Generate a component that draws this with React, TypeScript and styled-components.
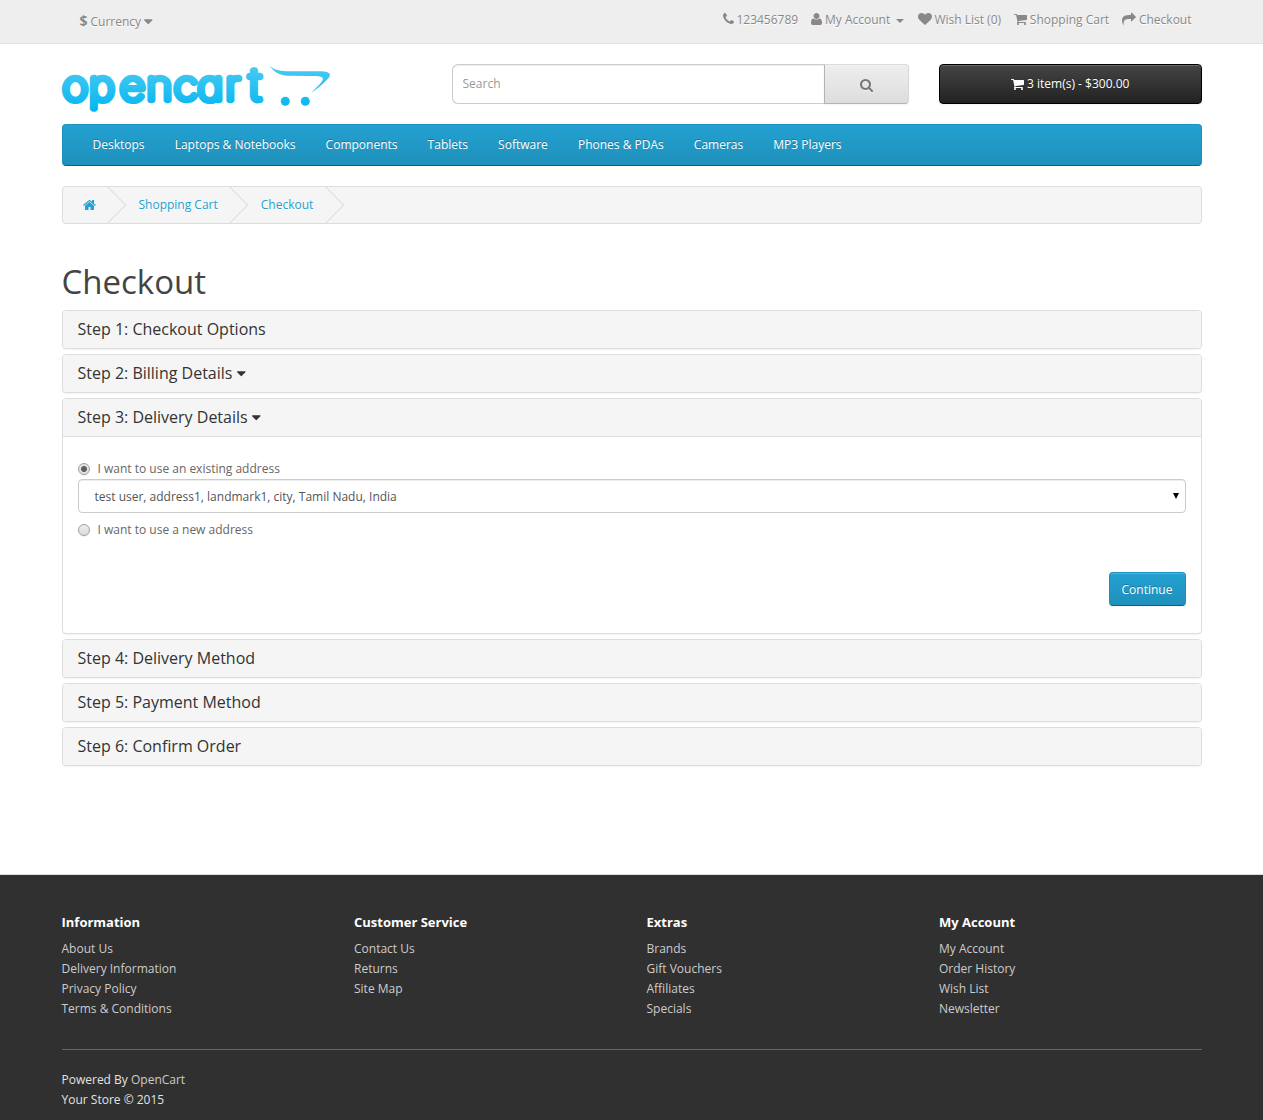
import React from "react";
import styled, { createGlobalStyle, css } from "styled-components";

const GlobalStyle = createGlobalStyle`
  *, *::before, *::after { box-sizing: border-box; }
  body {
    margin: 0;
    background: #fff;
    color: #666;
    font-family: "Open Sans", "Noto Sans", sans-serif;
    font-size: 12px;
    line-height: 20px;
  }
  a { color: inherit; text-decoration: none; }
  ul, ol { list-style: none; margin: 0; padding: 0; }
`;

const icons = {
  phone: { x: 192, w: 1408, d: "M1600 1240q0 27-10 70.5t-21 68.5q-21 50-122 106-94 51-186 51-27 0-53-3.5t-57.5-12.5-47-14.5-55.5-20.5-49-18q-98-35-175-83-127-79-264-216t-216-264q-48-77-83-175-3-9-18-49t-20.5-55.5-14.5-47-12.5-57.5-3.5-53q0-92 51-186 56-101 106-122 25-11 68.5-21t70.5-10q14 0 21 3 18 6 53 76 11 19 30 54t35 63.5 31 53.5q3 4 17.5 25t21.5 35.5 7 28.5q0 20-28.5 50t-62 55-62 53-28.5 46q0 9 5 22.5t8.5 20.5 14 24 11.5 19q76 137 174 235t235 174q2 1 19 11.5t24 14 20.5 8.5 22.5 5q18 0 46-28.5t53-62 55-62 50-28.5q14 0 28.5 7t35.5 21.5 25 17.5q25 15 53.5 31t63.5 35 54 30q70 35 76 53 3 7 3 21z" },
  user: { x: 192, w: 1408, d: "M1600 1405q0 120-73 189.5t-194 69.5h-874q-121 0-194-69.5t-73-189.5q0-53 3.5-103.5t14-109 26.5-108.5 43-97.5 62-81 85.5-53.5 111.5-20q9 0 42 21.5t74.5 48 108 48 133.5 21.5 133.5-21.5 108-48 74.5-48 42-21.5q61 0 111.5 20t85.5 53.5 62 81 43 97.5 26.5 108.5 14 109 3.5 103.5zm-320-893q0 159-112.5 271.5t-271.5 112.5-271.5-112.5-112.5-271.5 112.5-271.5 271.5-112.5 271.5 112.5 112.5 271.5z" },
  heart: { x: 0, w: 1792, d: "M896 1664q-26 0-44-18l-624-602q-10-8-27.5-26t-55.5-65.5-68-97.5-53.5-121-23.5-138q0-220 127-344t351-124q62 0 126.5 21.5t120 58 95.5 68.5 76 68q36-36 76-68t95.5-68.5 120-58 126.5-21.5q224 0 351 124t127 344q0 221-229 450l-623 600q-18 18-44 18z" },
  cart: { x: 64, w: 1664, d: "M704 1536q0 52-38 90t-90 38-90-38-38-90 38-90 90-38 90 38 38 90zm896 0q0 52-38 90t-90 38-90-38-38-90 38-90 90-38 90 38 38 90zm128-1088v512q0 24-16.5 42.5t-40.5 21.5l-1044 122q13 60 13 70 0 16-24 64h920q26 0 45 19t19 45-19 45-45 19h-1024q-26 0-45-19t-19-45q0-11 8-31.5t16-36 21.5-40 15.5-29.5l-177-823h-204q-26 0-45-19t-19-45 19-45 45-19h256q16 0 28.5 6.5t19.5 15.5 13 24.5 8 26 5.5 29.5 4.5 26h1201q26 0 45 19t19 45z" },
  share: { x: 0, w: 1792, d: "M1792 640q0 26-19 45l-512 512q-19 19-45 19t-45-19-19-45v-256h-224q-98 0-175.5 6t-154 21.5-133 42.5-105.5 69.5-80 101-48.5 138.5-17.5 181q0 55 5 123 0 6 2.5 23.5t2.5 26.5q0 15-8.5 25t-23.5 10q-16 0-28-17-7-9-13-22t-13.5-30-10.5-24q-127-285-127-451 0-199 53-333 162-403 875-403h224v-256q0-26 19-45t45-19 45 19l512 512q19 19 19 45z" },
  caret: { x: 384, w: 1024, d: "M1408 704q0 26-19 45l-448 448q-19 19-45 19t-45-19l-448-448q-19-19-19-45t19-45 45-19h896q26 0 45 19t19 45z" },
  search: { x: 64, w: 1664, d: "M1216 832q0-185-131.5-316.5t-316.5-131.5-316.5 131.5-131.5 316.5 131.5 316.5 316.5 131.5 316.5-131.5 131.5-316.5zm512 832q0 52-38 90t-90 38q-54 0-90-38l-343-342q-179 124-399 124-143 0-273.5-55.5t-225-150-150-225-55.5-273.5 55.5-273.5 150-225 225-150 273.5-55.5 273.5 55.5 225 150 150 225 55.5 273.5q0 220-124 399l343 343q37 37 37 90z" },
  home: { x: 64, w: 1664, d: "M1472 992v480q0 26-19 45t-45 19h-384v-384h-256v384h-384q-26 0-45-19t-19-45v-480q0-1 .5-3t.5-3l575-474 575 474q1 2 1 6zm223-69l-62 74q-8 9-21 11h-3q-13 0-21-7l-692-577-692 577q-12 8-24 7-13-2-21-11l-62-74q-8-10-7-23.5t11-21.5l719-599q32-26 76-26t76 26l244 204v-195q0-14 9-23t23-9h192q14 0 23 9t9 23v408l219 182q10 8 11 21.5t-7 23.5z" },
};

const Glyph = styled.svg`
  display: block;
  flex: none;
  fill: currentColor;
`;

function Icon({ name, size = 14 }: { name: keyof typeof icons; size?: number }) {
  const { x, w, d } = icons[name];
  return (
    <Glyph width={(w / 1792) * size} height={size} viewBox={`${x} 0 ${w} 1792`} aria-hidden="true">
      <path d={d} />
    </Glyph>
  );
}

const Container = styled.div`
  width: 1140px;
  margin: 0 auto;
`;

const TopBar = styled.nav`
  height: 44px;
  background: #eee;
  border-bottom: 1px solid #e2e2e2;
  color: #888;
  text-shadow: 0 1px 0 #fff;
`;

const TopInner = styled(Container)`
  display: flex;
  justify-content: space-between;
  padding: 0 10px 0 18px;
`;

const Currency = styled.button`
  display: flex;
  align-items: center;
  gap: 3px;
  height: 20px;
  margin-top: 12px;
  padding: 0;
  border: 0;
  background: none;
  color: inherit;
  font: inherit;
  text-shadow: inherit;
  strong { font-size: 14px; line-height: 18px; padding-bottom: 2px; }
  svg { margin-bottom: 2px; }
`;

const TopLinks = styled.ul`
  display: flex;
  gap: 13px;
  margin-top: 10px;
`;

const TopLink = styled.a`
  display: flex;
  align-items: center;
  gap: 2.8px;
  height: 20px;
  svg { margin-bottom: 2px; }
`;

const SmallCaret = styled.span`
  margin: 2px 1px 0 2.6px;
  border-top: 4px solid currentColor;
  border-left: 4px solid transparent;
  border-right: 4px solid transparent;
`;

const Header = styled(Container)`
  display: grid;
  grid-template-columns: 390px 457px 293px;
  height: 80px;
  align-items: start;
  padding-top: 20px;
`;

const CartButton = styled.button`
  display: flex;
  align-items: center;
  justify-content: center;
  gap: 3px;
  width: 263px;
  height: 40px;
  margin-left: 30px;
  padding: 0 0 1px 0.5px;
  border: 1px solid #000;
  border-radius: 4px;
  background: linear-gradient(#444, #222);
  box-shadow: inset 0 1px 0 rgba(255, 255, 255, 0.2), 0 1px 2px rgba(0, 0, 0, 0.05);
  color: #fff;
  font: inherit;
  text-shadow: 0 -1px 0 rgba(0, 0, 0, 0.25);
`;

const SearchGroup = styled.form`
  display: flex;
  width: 457px;
  height: 40px;
`;

const SearchInput = styled.input`
  width: 373px;
  padding: 0 10px 1px;
  border: 1px solid #ccc;
  border-right: 0;
  border-radius: 6px 0 0 6px;
  box-shadow: inset 0 1px 1px rgba(0, 0, 0, 0.075);
  font: inherit;
  outline: 0;
  &::placeholder { color: #999; opacity: 1; }
`;

const SearchButton = styled.button`
  display: flex;
  align-items: center;
  justify-content: center;
  width: 85px;
  padding: 2px 0 0;
  border: 1px solid;
  border-color: #d9d9d9 #d9d9d9 #b3b3b3 #b3b3b3;
  border-radius: 0 4px 4px 0;
  background: linear-gradient(#eee, #ddd);
  box-shadow: inset 0 1px 0 rgba(255, 255, 255, 0.2), 0 1px 2px rgba(0, 0, 0, 0.05);
  color: #777;
  svg { filter: drop-shadow(0 1px 0 rgba(255, 255, 255, 0.5)); }
`;

const blueSurface = css`
  background: linear-gradient(#23a1d1, #1f90bb);
  border: 1px solid;
  border-color: #1f90bb #1f90bb #145e7a;
  border-radius: 4px;
  color: #fff;
  text-shadow: 0 -1px 0 rgba(0, 0, 0, 0.25);
`;

const MenuBar = styled(Container).attrs({ as: "nav" })`
  ${blueSurface}
  height: 42px;
  padding-left: 30px;
  ul { display: flex; gap: 30.1px; line-height: 40px; }
`;

const Crumbs = styled(Container).attrs({ as: "ol" })`
  display: flex;
  height: 38px;
  margin-top: 20px;
  border: 1px solid #ddd;
  border-radius: 4px;
  background: #f5f5f5;
  overflow: hidden;
  color: #23a1d1;
  text-shadow: 0 1px 0 #fff;
`;

const Crumb = styled.li`
  display: flex;
  align-items: center;
  position: relative;
  height: 36px;
  padding: 0 23px 0 20px;
  &::after {
    content: "";
    position: absolute;
    top: 5px;
    right: -2px;
    width: 26px;
    height: 26px;
    border-right: 1px solid #ddd;
    border-bottom: 1px solid #ddd;
    transform: rotate(-45deg);
  }
  &:last-child { padding-right: 24px; }
`;

const Title = styled.h1`
  margin: 40px 0 11px;
  color: #444;
  font-size: 33px;
  font-weight: 400;
  line-height: 35px;
`;

const Panels = styled.div`
  display: grid;
  gap: 5px;
`;

const Panel = styled.section`
  border: 1px solid #ddd;
  border-radius: 4px;
  background: #fff;
  box-shadow: 0 1px 1px rgba(0, 0, 0, 0.05);
  overflow: hidden;
`;

const PanelHeading = styled.h4`
  display: flex;
  align-items: center;
  gap: 4.5px;
  height: 37px;
  margin: 0;
  padding: 0 15px;
  background: #f5f5f5;
  color: #333;
  font-size: 16px;
  font-weight: 400;
  line-height: 17px;
`;

const PanelBody = styled.form`
  display: flex;
  flex-direction: column;
  height: 197px;
  padding: 22px 15px 27px;
  border-top: 1px solid #ddd;
`;

const RadioRow = styled.label`
  display: flex;
  align-items: center;
  gap: 8px;
  height: 20px;
`;

const Radio = styled.input.attrs({ type: "radio" })`
  appearance: none;
  width: 12px;
  height: 12px;
  margin: 0;
  border: 1px solid #a0a0a0;
  border-radius: 50%;
  background: linear-gradient(#ededed, #dcdcdc);
  box-shadow: 0 1px 0 rgba(0, 0, 0, 0.06);
  &:checked { background: radial-gradient(circle, #606060 2.6px, #e4e4e4 3.4px); }
`;

const AddressSelect = styled.div`
  display: flex;
  align-items: center;
  justify-content: space-between;
  height: 34px;
  margin-bottom: 7px;
  padding: 2px 6px 0 16px;
  border: 1px solid #ccc;
  border-radius: 4px;
  box-shadow: inset 0 1px 1px rgba(0, 0, 0, 0.075);
  color: #555;
`;

const SelectArrow = styled.span`
  margin-top: -3px;
  border-top: 6px solid #000;
  border-left: 3.5px solid transparent;
  border-right: 3.5px solid transparent;
`;

const ContinueButton = styled.button`
  ${blueSurface}
  align-self: flex-end;
  width: 77px;
  height: 34px;
  margin-top: auto;
  padding: 2px 0 0;
  box-shadow: inset 0 1px 0 rgba(255, 255, 255, 0.2), 0 1px 2px rgba(0, 0, 0, 0.05);
  font: inherit;
`;

const Footer = styled.footer`
  height: 246px;
  margin-top: 108px;
  padding-top: 30px;
  border-top: 1px solid #ddd;
  background: #303030;
  color: #e2e2e2;
`;

const FooterColumns = styled.div`
  display: grid;
  grid-template-columns: repeat(4, 292.5px);
  height: 144px;
`;

const FooterTitle = styled.h5`
  margin: 10px 0;
  color: #fff;
  font-size: 13px;
  font-weight: 700;
  line-height: 14px;
`;

const FooterLinks = styled.ul`
  color: #ccc;
`;

const Legal = styled.p`
  margin: 0;
  padding-top: 20px;
  border-top: 1px solid #666;
  a { color: #ccc; }
`;

const LogoArt = styled.svg`
  display: block;
  margin-top: -8px;
  overflow: visible;
  text {
    font-family: "Inter", sans-serif;
    font-size: 40px;
    font-weight: 100;
    font-feature-settings: "cv11" 1;
  }
  tspan { font-size: 43px; }
`;

function Logo() {
  return (
    <LogoArt width="270" height="68" viewBox="0.6 -8 270 68" role="img" aria-label="opencart">
      <defs>
        <linearGradient id="sky" gradientUnits="userSpaceOnUse" x1="0" y1="0" x2="0" y2="50">
          <stop offset="0" stopColor="#4ccbf2" />
          <stop offset="1" stopColor="#00b5f0" />
        </linearGradient>
      </defs>
      <g fill="url(#sky)">
        <text
          transform="scale(1.1 1)"
          x="1.05 25.2 53 77.3 102.1 123.8 149.1 170.7"
          y="35.6"
          stroke="url(#sky)"
          strokeWidth="6.4"
          strokeLinejoin="round"
        >
          opencar<tspan>t</tspan>
        </text>
        <path d="M208 1.2C212 5.4 217 7 225 7.2L256 7.2C267 7.2 270.5 9 267.5 13.5C264 18 257 24 250 28.8C255 23.5 261.5 18 261.5 14.5C261 12 257 12 250 11.9L226 11.7C216 11 211 6 208 1.2Z" />
        <circle cx="223.9" cy="37.3" r="4.5" />
        <circle cx="243.9" cy="37.3" r="4.5" />
      </g>
    </LogoArt>
  );
}

const menu = ["Desktops", "Laptops & Notebooks", "Components", "Tablets", "Software", "Phones & PDAs", "Cameras", "MP3 Players"];

const footerColumns = [
  { title: "Information", links: ["About Us", "Delivery Information", "Privacy Policy", "Terms & Conditions"] },
  { title: "Customer Service", links: ["Contact Us", "Returns", "Site Map"] },
  { title: "Extras", links: ["Brands", "Gift Vouchers", "Affiliates", "Specials"] },
  { title: "My Account", links: ["My Account", "Order History", "Wish List", "Newsletter"] },
];

const stepsAfter = ["Step 4: Delivery Method", "Step 5: Payment Method", "Step 6: Confirm Order"];

export default function App() {
  return (
    <>
      <GlobalStyle />
      <TopBar>
        <TopInner>
          <Currency>
            <strong>$</strong>
            <span>Currency</span>
            <Icon name="caret" size={15} />
          </Currency>
          <TopLinks>
            <li><TopLink href="#"><Icon name="phone" />123456789</TopLink></li>
            <li><TopLink href="#"><Icon name="user" />My Account<SmallCaret /></TopLink></li>
            <li><TopLink href="#"><Icon name="heart" />Wish List (0)</TopLink></li>
            <li><TopLink href="#"><Icon name="cart" />Shopping Cart</TopLink></li>
            <li><TopLink href="#"><Icon name="share" />Checkout</TopLink></li>
          </TopLinks>
        </TopInner>
      </TopBar>
      <Header>
        <Logo />
        <SearchGroup>
          <SearchInput placeholder="Search" />
          <SearchButton type="button" aria-label="Search"><Icon name="search" /></SearchButton>
        </SearchGroup>
        <CartButton><Icon name="cart" />3 item(s) - $300.00</CartButton>
      </Header>
      <MenuBar>
        <ul>{menu.map((item) => <li key={item}><a href="#">{item}</a></li>)}</ul>
      </MenuBar>
      <Crumbs>
        <Crumb><a href="#" aria-label="Home"><Icon name="home" /></a></Crumb>
        <Crumb><a href="#">Shopping Cart</a></Crumb>
        <Crumb><a href="#">Checkout</a></Crumb>
      </Crumbs>
      <Container>
        <Title>Checkout</Title>
        <Panels>
          <Panel><PanelHeading>Step 1: Checkout Options</PanelHeading></Panel>
          <Panel><PanelHeading>Step 2: Billing Details<Icon name="caret" size={15} /></PanelHeading></Panel>
          <Panel>
            <PanelHeading>Step 3: Delivery Details<Icon name="caret" size={15} /></PanelHeading>
            <PanelBody>
              <RadioRow><Radio name="address" defaultChecked />I want to use an existing address</RadioRow>
              <AddressSelect>test user, address1, landmark1, city, Tamil Nadu, India<SelectArrow /></AddressSelect>
              <RadioRow><Radio name="address" />I want to use a new address</RadioRow>
              <ContinueButton type="button">Continue</ContinueButton>
            </PanelBody>
          </Panel>
          {stepsAfter.map((step) => <Panel key={step}><PanelHeading>{step}</PanelHeading></Panel>)}
        </Panels>
      </Container>
      <Footer>
        <Container>
          <FooterColumns>
            {footerColumns.map((column) => (
              <div key={column.title}>
                <FooterTitle>{column.title}</FooterTitle>
                <FooterLinks>
                  {column.links.map((link) => <li key={link}><a href="#">{link}</a></li>)}
                </FooterLinks>
              </div>
            ))}
          </FooterColumns>
          <Legal>Powered By <a href="#">OpenCart</a><br />Your Store © 2015</Legal>
        </Container>
      </Footer>
    </>
  );
}
